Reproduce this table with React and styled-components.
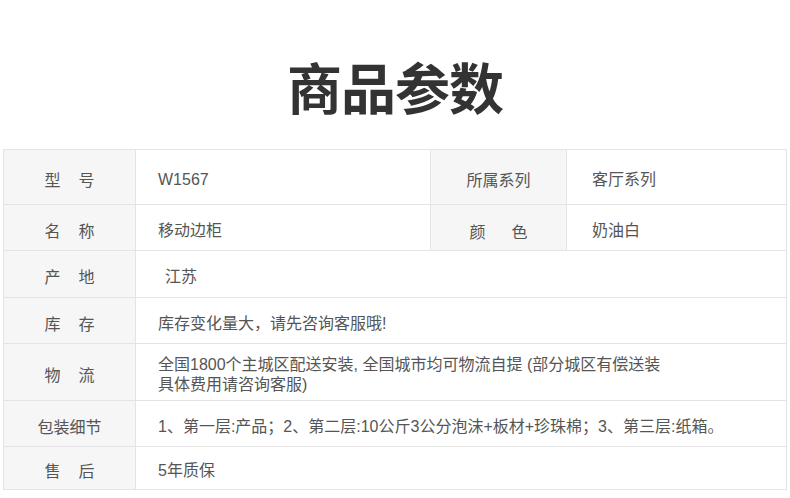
import React from "react";
import styled, { createGlobalStyle } from "styled-components";

const GlobalStyle = createGlobalStyle`
  body {
    margin: 0;
    background: #fff;
    font-family: "Liberation Sans", "Noto Sans CJK SC", sans-serif;
  }
`;

const rows = [
  { label: ["型", "号"], value: "W1567", h: 54, label2: ["所属系列"], value2: "客厅系列" },
  { label: ["名", "称"], value: "移动边柜", h: 45, label2: ["颜", "色"], value2: "奶油白", gap2: 26 },
  { label: ["产", "地"], value: "江苏", h: 46, indent: 29 },
  { label: ["库", "存"], value: "库存变化量大，请先咨询客服哦!", h: 45 },
  {
    label: ["物", "流"],
    value: "全国1800个主城区配送安装, 全国城市均可物流自提 (部分城区有偿送装\n具体费用请咨询客服)",
    h: 56,
  },
  {
    label: ["包装细节"],
    value: "1、第一层:产品；2、第二层:10公斤3公分泡沫+板材+珍珠棉；3、第三层:纸箱。",
    h: 45,
  },
  { label: ["售", "后"], value: "5年质保", h: 42 },
];

const Page = () => (
  <Wrap>
    <GlobalStyle />
    <Header>
      <Title>商品参数</Title>
    </Header>
    <Table>
      {rows.map((r, i) => (
        <React.Fragment key={i}>
          <Label h={r.h}>
            <Spread gap={18}>
              {r.label.map((c) => (
                <span key={c}>{c}</span>
              ))}
            </Spread>
          </Label>
          <Value h={r.h} indent={r.indent} wide={!r.label2}>
            {r.value}
          </Value>
          {r.label2 && (
            <>
              <Label h={r.h} down={r.gap2 ? 3 : 0}>
                <Spread gap={r.gap2 || 18}>
                  {r.label2.map((c) => (
                    <span key={c}>{c}</span>
                  ))}
                </Spread>
              </Label>
              <Value h={r.h} indent={25}>
                {r.value2}
              </Value>
            </>
          )}
        </React.Fragment>
      ))}
    </Table>
  </Wrap>
);

const Wrap = styled.div`
  width: 790px;
  height: 498px;
  overflow: hidden;
`;

const Header = styled.div`
  height: 149px;
  padding-top: 21px;
  box-sizing: border-box;
  display: flex;
  align-items: center;
  justify-content: center;
`;

const Title = styled.h1`
  margin: 0;
  font-family: "Noto Sans CJK SC", sans-serif;
  font-size: 55px;
  font-weight: 700;
  color: #333;
  letter-spacing: -1px;
  line-height: 1;
`;

const Table = styled.div`
  margin-left: 3px;
  width: 784px;
  box-sizing: border-box;
  display: grid;
  grid-template-columns: 131px 294px 135px 1fr;
  gap: 1px;
  background: #e4e4e4;
  border: 1px solid #e4e4e4;
`;

const Label = styled.div`
  height: ${(p) => p.h}px;
  background: #f6f6f6;
  display: flex;
  align-items: center;
  justify-content: center;
  padding-top: ${(p) => 4 + (p.down || 0)}px;
  box-sizing: border-box;
  font-size: 16px;
  color: #555;
`;

const Spread = styled.div`
  display: flex;
  gap: ${(p) => p.gap}px;
`;

const Value = styled.div`
  height: ${(p) => p.h}px;
  grid-column: ${(p) => (p.wide ? "2 / -1" : "auto")};
  background: #fff;
  display: flex;
  align-items: center;
  padding-left: ${(p) => p.indent || 22}px;
  padding-top: 6px;
  box-sizing: border-box;
  font-size: 16px;
  line-height: 20px;
  color: #555;
  white-space: pre-line;
`;

export default Page;
